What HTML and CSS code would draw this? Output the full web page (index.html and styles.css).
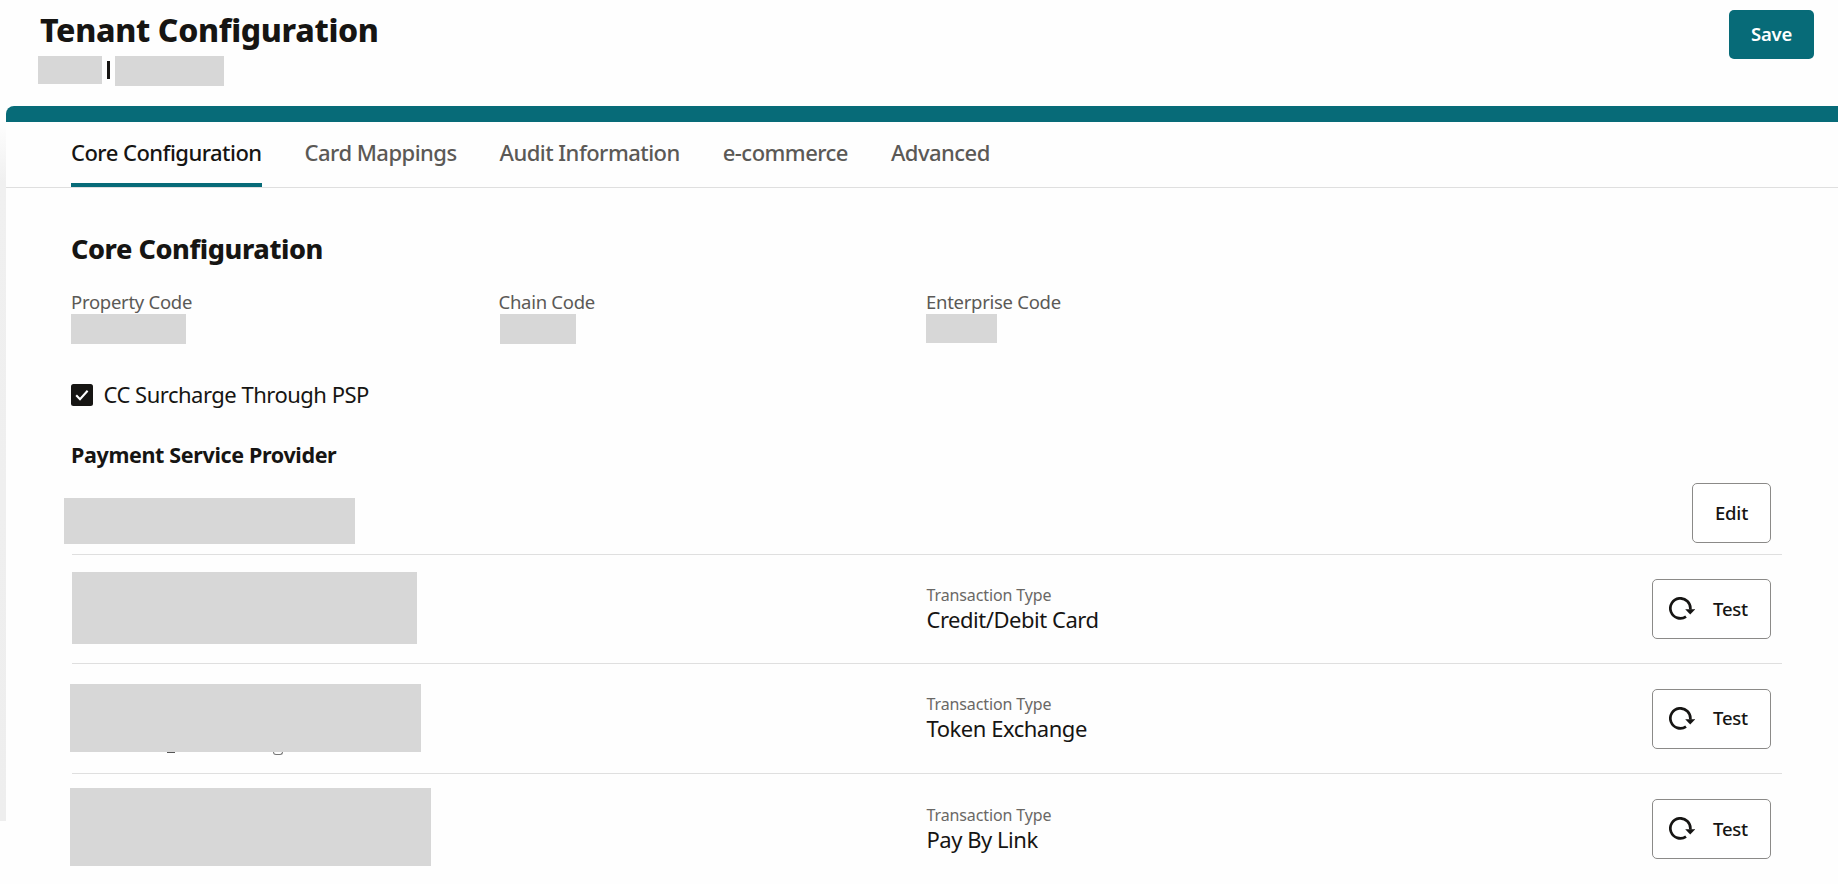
FILE: index.html
```html
<!DOCTYPE html>
<html lang="en">

<head>
    <meta charset="UTF-8">
    <meta name="viewport" content="width=device-width, initial-scale=1.0">
    <title>Tenant Configuration</title>
    <link rel="stylesheet" href="styles.css">
</head>

<body>
    <header class="page-header">
        <div>
            <h1>Tenant Configuration</h1>
            <div class="subtitle">
                <span class="redacted tenant-code"></span>
                <span class="divider"></span>
                <span class="redacted tenant-name"></span>
            </div>
        </div>
        <button class="btn btn-primary" type="button">Save</button>
    </header>

    <div class="page-body">
        <div class="side-shadow"></div>
        <main class="panel">
            <nav class="tabs">
                <a class="tab active">Core Configuration</a>
                <a class="tab">Card Mappings</a>
                <a class="tab">Audit Information</a>
                <a class="tab">e-commerce</a>
                <a class="tab">Advanced</a>
            </nav>

            <section class="content">
                <h2>Core Configuration</h2>
                <div class="codes">
                    <div class="code">
                        <div class="code-label">Property Code</div>
                        <div class="redacted property-code"></div>
                    </div>
                    <div class="code">
                        <div class="code-label">Chain Code</div>
                        <div class="redacted chain-code"></div>
                    </div>
                    <div class="code">
                        <div class="code-label">Enterprise Code</div>
                        <div class="redacted enterprise-code"></div>
                    </div>
                </div>

                <div class="checkbox-row">
                    <svg class="checkbox" viewBox="0 0 22 22">
                        <rect width="22" height="22" rx="2.5" fill="#161513" />
                        <path d="M5.2 11.3L9 15.2L16.6 6.8" fill="none" stroke="#fff" stroke-width="2.1" />
                    </svg>
                    <span>CC Surcharge Through PSP</span>
                </div>

                <h3>Payment Service Provider</h3>
                <div class="rows">
                    <div class="row provider-row">
                        <div class="redacted provider-name"></div>
                        <button class="btn btn-edit" type="button">Edit</button>
                    </div>
                    <div class="row">
                        <div><div class="redacted url-card"></div></div>
                        <div class="type">
                            <div class="type-label">Transaction Type</div>
                            <div class="type-value">Credit/Debit Card</div>
                        </div>
                        <button class="btn btn-test" type="button">
                            <svg class="refresh" viewBox="0 0 26 23">
                                <path d="M17 19.6A10 10 0 1 1 21.3 12.5" fill="none" stroke="#161513" stroke-width="2.7" />
                                <path d="M16.2 12.2H26.2L21.2 17.6Z" fill="#161513" />
                            </svg>
                            Test
                        </button>
                    </div>
                    <div class="row tall">
                        <div><div class="redacted url-token"></div></div>
                        <div class="type">
                            <div class="type-label">Transaction Type</div>
                            <div class="type-value">Token Exchange</div>
                        </div>
                        <button class="btn btn-test" type="button">
                            <svg class="refresh" viewBox="0 0 26 23">
                                <path d="M17 19.6A10 10 0 1 1 21.3 12.5" fill="none" stroke="#161513" stroke-width="2.7" />
                                <path d="M16.2 12.2H26.2L21.2 17.6Z" fill="#161513" />
                            </svg>
                            Test
                        </button>
                    </div>
                    <div class="row tall">
                        <div><div class="redacted url-link"></div></div>
                        <div class="type">
                            <div class="type-label">Transaction Type</div>
                            <div class="type-value">Pay By Link</div>
                        </div>
                        <button class="btn btn-test" type="button">
                            <svg class="refresh" viewBox="0 0 26 23">
                                <path d="M17 19.6A10 10 0 1 1 21.3 12.5" fill="none" stroke="#161513" stroke-width="2.7" />
                                <path d="M16.2 12.2H26.2L21.2 17.6Z" fill="#161513" />
                            </svg>
                            Test
                        </button>
                    </div>
                </div>
            </section>
        </main>
    </div>
</body>

</html>
```
FILE: styles.css
```css
* {
    box-sizing: border-box;
}

body {
    margin: 0;
    height: 884px;
    overflow: hidden;
    background-color: #fefefe;
    color: #161513;
    font-family: "Noto Sans", "Open Sans", sans-serif;
}

h1,
h2,
h3 {
    margin: 0;
}

.redacted {
    background-color: #d7d7d7;
}

/* header */
.page-header {
    display: flex;
    justify-content: space-between;
    align-items: flex-start;
    height: 106px;
    padding: 8px 24px 0 38px;
}

h1 {
    font-size: 32px;
    line-height: 44px;
    font-weight: 800;
    letter-spacing: -0.33px;
    padding-left: 2px;
}

.subtitle {
    display: flex;
    align-items: flex-start;
    margin-top: 4px;
}

.tenant-code {
    width: 64px;
    height: 28px;
}

.divider {
    width: 3px;
    height: 18px;
    margin: 5px 5px 0;
    background-color: #161513;
}

.tenant-name {
    width: 109px;
    height: 30px;
}

/* buttons */
.btn {
    display: flex;
    justify-content: center;
    align-items: center;
    padding: 0 0 2px;
    border: 1px solid #8b8a88;
    border-radius: 5px;
    background-color: #fff;
    color: #161513;
    font-family: inherit;
    font-size: 18.5px;
    font-weight: 550;
    letter-spacing: -0.2px;
}

.btn-primary {
    width: 85px;
    height: 49px;
    margin-top: 2px;
    border: none;
    background-color: #076b78;
    color: #fff;
    font-weight: 600;
}

.btn-edit {
    width: 79px;
    height: 60px;
}

.btn-test {
    justify-content: flex-start;
    width: 119px;
    height: 60px;
    padding-left: 16px;
}

.refresh {
    width: 26px;
    height: 23px;
    margin: 1px 18px 0 0;
}

/* panel */
.page-body {
    display: flex;
}

.side-shadow {
    width: 6px;
    height: 699px;
    margin-top: 16px;
    background: linear-gradient(#fefefe, #f0f0f0 60px, #eeeeee);
}

.panel {
    flex: 1;
    border-top: 16px solid #076b78;
    border-top-left-radius: 8px;
}

.tabs {
    display: flex;
    gap: 43px;
    height: 66px;
    padding-left: 65px;
    border-bottom: 1px solid #dfdfdf;
}

.tab {
    height: 65px;
    line-height: 61px;
    border-bottom: 4px solid transparent;
    color: #5b5956;
    font-size: 22px;
    font-weight: 500;
    letter-spacing: -0.53px;
    white-space: nowrap;
}

.tab.active {
    border-color: #076b78;
    color: #161513;
}

.content {
    padding: 43px 56px 0 65px;
}

h2 {
    font-size: 27px;
    line-height: 36px;
    font-weight: 800;
    letter-spacing: -0.42px;
}

.codes {
    display: grid;
    grid-template-columns: repeat(4, 427.5px);
    height: 54px;
    margin-top: 23px;
}

.code-label {
    color: #5b5956;
    font-size: 18.5px;
    line-height: 24px;
    letter-spacing: -0.28px;
}

.property-code {
    width: 115px;
    height: 30px;
}

.chain-code {
    width: 76px;
    height: 30px;
    margin-left: 1px;
}

.enterprise-code {
    width: 71px;
    height: 29px;
}

.checkbox-row {
    display: flex;
    align-items: center;
    gap: 10.5px;
    margin-top: 35px;
    font-size: 22px;
    line-height: 30px;
    letter-spacing: -0.5px;
}

.checkbox {
    width: 22px;
    height: 22px;
    margin-top: 2px;
}

h3 {
    margin-top: 31px;
    font-size: 21.5px;
    line-height: 30px;
    font-weight: 700;
    letter-spacing: -0.36px;
}

/* transaction rows */
.rows {
    margin-left: 1px;
}

.row {
    display: grid;
    grid-template-columns: 854px 1fr auto;
    align-items: center;
    height: 109px;
    padding-right: 11px;
    border-bottom: 1px solid #dfdfdf;
}

.row.tall {
    height: 110px;
}

.row:last-child {
    border-bottom: none;
}

.provider-row {
    display: flex;
    justify-content: space-between;
    align-items: flex-end;
    height: 85px;
    padding-bottom: 11px;
}

.provider-name {
    width: 291px;
    height: 46px;
    margin: 0 0 -1px -8px;
}

.url-card {
    width: 345px;
    height: 72px;
    margin-bottom: 2px;
}

.url-token {
    position: relative;
    width: 351px;
    height: 68px;
    margin: 0 0 1px -2px;
}

/* descenders of the covered url */
.url-token::before,
.url-token::after {
    content: "";
    position: absolute;
    top: 68px;
    left: 97px;
    width: 8px;
    height: 1px;
    background-color: #555;
}

.url-token::after {
    left: 203px;
    height: 2px;
    border: 1px solid #777;
    border-top: none;
    border-radius: 0 0 4px 4px;
    background: none;
}

.url-link {
    width: 361px;
    height: 78px;
    margin: 0 0 4px -2px;
}

.type {
    padding: 0 0 2px 0.5px;
}

.type-label {
    color: #6a6865;
    font-size: 16px;
    line-height: 21px;
    letter-spacing: -0.12px;
}

.type-value {
    font-size: 22px;
    line-height: 26px;
    letter-spacing: -0.47px;
}
```
